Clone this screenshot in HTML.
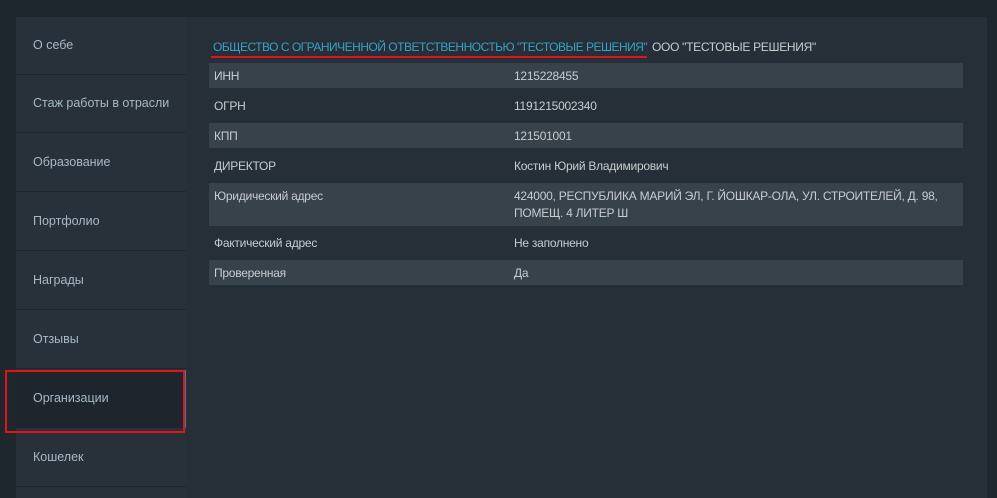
<!DOCTYPE html>
<html><head><meta charset="utf-8"><style>
*{margin:0;padding:0;box-sizing:border-box}
body{width:997px;height:498px;background:#1f272e;font-family:"Liberation Sans",sans-serif;font-size:12px;overflow:hidden;position:relative}
.panel{position:absolute;left:16px;top:17px;width:971px;height:481px;background:#262f37}
.side{position:absolute;left:16px;top:17px;width:170px;height:481px;background:#283139}
.it{position:absolute;left:16px;width:170px;height:58px;border-bottom:1px solid #1f272e;color:#a9b8c4;padding-left:17px;line-height:57px;font-size:12.5px}
.act{background:#1e252c;border-right:2px solid #3a7f9e}
.red{position:absolute;left:5px;top:370px;width:180px;height:63px;border:2px solid #e0141b}
.row{position:absolute;left:209px;width:754px;height:25px;color:#c8ccd0;letter-spacing:-0.25px}
.row.s{background:#37424a}
.row span{position:absolute;left:305px;top:5px;line-height:17px}
.row b{font-weight:normal;position:absolute;left:5px;top:5px;line-height:17px}
.title{position:absolute;left:213px;top:40px;color:#3a9fc9;font-size:12px;letter-spacing:-0.5px;white-space:nowrap}
.title2{position:absolute;left:652px;top:40px;color:#c8ccd0;letter-spacing:-0.3px}
.ul{position:absolute;left:211px;top:56px;width:436px;height:2px;background:#e0141b}
</style></head><body>
<div class="panel"></div>
<div class="side"></div>
<div class="it" style="top:17px">О себе</div>
<div class="it" style="top:75px">Стаж работы в отрасли</div>
<div class="it" style="top:134px">Образование</div>
<div class="it" style="top:193px">Портфолио</div>
<div class="it" style="top:252px">Награды</div>
<div class="it" style="top:311px">Отзывы</div>
<div class="it act" style="top:370px">Организации</div>
<div class="it" style="top:429px">Кошелек</div>
<div class="red"></div>
<div class="title">ОБЩЕСТВО С ОГРАНИЧЕННОЙ ОТВЕТСТВЕННОСТЬЮ "ТЕСТОВЫЕ РЕШЕНИЯ"</div>
<div class="title2">ООО "ТЕСТОВЫЕ РЕШЕНИЯ"</div>
<div class="ul"></div>
<div class="row s" style="top:63px"><b>ИНН</b><span>1215228455</span></div>
<div class="row" style="top:93px"><b>ОГРН</b><span>1191215002340</span></div>
<div class="row s" style="top:123px"><b>КПП</b><span>121501001</span></div>
<div class="row" style="top:153px"><b>ДИРЕКТОР</b><span>Костин Юрий Владимирович</span></div>
<div class="row s" style="top:183px;height:43px"><b>Юридический адрес</b><span>424000, РЕСПУБЛИКА МАРИЙ ЭЛ, Г. ЙОШКАР-ОЛА, УЛ. СТРОИТЕЛЕЙ, Д. 98,<br>ПОМЕЩ. 4 ЛИТЕР Ш</span></div>
<div class="row" style="top:230px"><b>Фактический адрес</b><span>Не заполнено</span></div>
<div class="row s" style="top:260px"><b>Проверенная</b><span>Да</span></div>
</body></html>
